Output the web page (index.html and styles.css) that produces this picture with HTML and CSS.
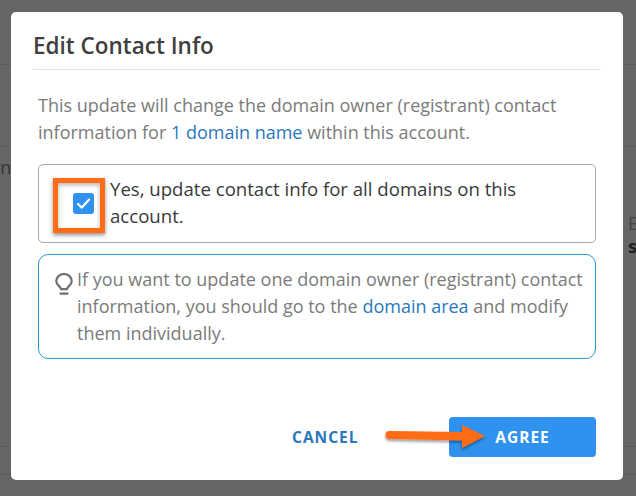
FILE: index.html
```html
<!DOCTYPE html>
<html lang="en">
<head>
<meta charset="utf-8">
<title>Edit Contact Info</title>
<link rel="stylesheet" href="styles.css">
</head>
<body>
<div class="page">
  <div class="bg-line l1"></div>
  <div class="bg-line l2"></div>
  <div class="bg-line l3"></div>
  <div class="bg-line l4"></div>
  <span class="bg-text t1">rn</span>
  <span class="bg-text t2">E</span>
  <span class="bg-text t3">s</span>
  <div class="modal">
    <h1 class="title">Edit Contact Info</h1>
    <p class="intro">This update will change the domain owner (registrant) contact information for <span class="link">1 domain name</span> within this account.</p>
    <div class="check-box">
      <span class="check-cell">
        <span class="checkbox">
          <svg viewBox="0 0 21 21" width="21" height="21"><path d="M5 11l3.8 3.6 7.4-8" fill="none" stroke="#fff" stroke-width="2.2" stroke-linecap="round" stroke-linejoin="round"/></svg>
        </span>
      </span>
      <span class="check-label">Yes, update contact info for all domains on this account.</span>
    </div>
    <div class="tip">
      <svg class="bulb" viewBox="0 0 18 23" width="18" height="23"><path d="M6 16.2c0-2.6-4.7-3.9-4.7-8A7.7 7.2 0 0 1 16.7 8.200c0 4.100-4.700 5.400-4.700 8z" fill="none" stroke="#6f6f6f" stroke-width="2.2" stroke-linejoin="round"/><path d="M5.500 20.700h7" fill="none" stroke="#6f6f6f" stroke-width="2.200" stroke-linecap="round"/></svg>
      <p class="tip-text">If you want to update one domain owner (registrant) contact information, you should go to the <span class="link">domain area</span> and modify them individually.</p>
    </div>
    <div class="actions">
      <button class="btn cancel">CANCEL</button>
      <button class="btn agree">AGREE</button>
    </div>
  </div>
  <div class="highlight"></div>
  <svg class="arrow" viewBox="0 0 112 40" width="112" height="40"><defs><filter id="s" x="-10%" y="-30%" width="120%" height="170%"><feDropShadow dx="0" dy="2" stdDeviation="1.6" flood-color="#000" flood-opacity=".4"/></filter></defs><path d="M5.500 13L78 14V7l23 11-23 12V22.500L5.500 21a4 4 0 0 1 0-8z" fill="#ff6c17" filter="url(#s)"/></svg>
</div>
</body>
</html>
```
FILE: styles.css
```css
* { box-sizing: border-box; }
html, body { margin: 0; padding: 0; }
body { font-family: "Open Sans", sans-serif; }
.page {
  position: relative;
  width: 636px;
  height: 496px;
  overflow: hidden;
  background: #666;
  padding: 12px 13px 16px 11px;
}
.bg-line { position: absolute; left: 0; right: 0; height: 1px; background: #5b5b5e; }
.l1 { top: 64px; }
.l2 { top: 146px; }
.l3 { top: 446px; }
.l4 { top: 474px; }
.bg-text { position: absolute; font-size: 18px; line-height: 20px; color: #333; }
.t1 { left: -7px; top: 157px; }
.t2 { left: 628px; top: 213px; color: #444; }
.t3 { left: 628px; top: 236px; font-weight: 700; color: #222; }
.modal {
  position: relative;
  height: 468px;
  background: #fff;
  border-radius: 5px;
  padding: 19px 22px 0;
  display: flex;
  flex-direction: column;
}
.title {
  margin: 0;
  font-size: 22.5px;
  line-height: 29px;
  font-weight: 600;
  color: #3f3f3f;
  padding-bottom: 9px;
  border-bottom: 1px solid #e2e2e2;
}
.intro {
  margin: 22px 0 0 5px;
  font-size: 18px;
  line-height: 27px;
  color: #7b7b7b;
  width: 540px;
}
.link { color: #2a78bd; }
.check-box {
  margin: 18px 5px 0 5px;
  height: 79px;
  border: 1px solid #a9a9a9;
  border-radius: 5px;
  display: flex;
  padding-top: 10px;
}
.check-cell {
  flex: none;
  width: 71px;
  padding: 18px 0 0 34px;
}
.checkbox {
  display: block;
  width: 21px;
  height: 21px;
  border-radius: 3px;
  background: #2f92ee;
}
.checkbox svg { display: block; }
.check-label {
  font-size: 18.6px;
  line-height: 27px;
  color: #3a3a3a;
  width: 430px;
}
.tip {
  margin: 11px 5px 0 5px;
  height: 105px;
  border: 1px solid #2a9bc9;
  border-radius: 10px;
  display: flex;
  padding: 11px 0 0 16px;
}
.bulb { flex: none; margin: 7px 4px 0 0; }
.tip-text {
  margin: 0;
  font-size: 18px;
  line-height: 27px;
  color: #7b7b7b;
  width: 510px;
}
.actions {
  margin: 58px 5px 0 0;
  display: flex;
  justify-content: flex-end;
  align-items: center;
}
.btn {
  font-family: "Open Sans", sans-serif;
  font-size: 15.5px;
  font-weight: 700;
  letter-spacing: 1px;
  border: 0;
  border-radius: 4px;
  height: 40px;
  padding: 0;
  background: none;
}
.cancel { color: #2a78bd; width: 66px; margin-right: 91px; }
.agree { background: #2f92ee; color: #fff; width: 147px; }
.highlight {
  position: absolute;
  left: 53px;
  top: 178px;
  width: 52px;
  height: 55px;
  border: 5px solid #ff6c17;
  box-shadow: 0 2px 4px rgba(0,0,0,.45), inset 0 2px 4px rgba(0,0,0,.3);
}
.arrow { position: absolute; left: 384px; top: 418px; }
```
